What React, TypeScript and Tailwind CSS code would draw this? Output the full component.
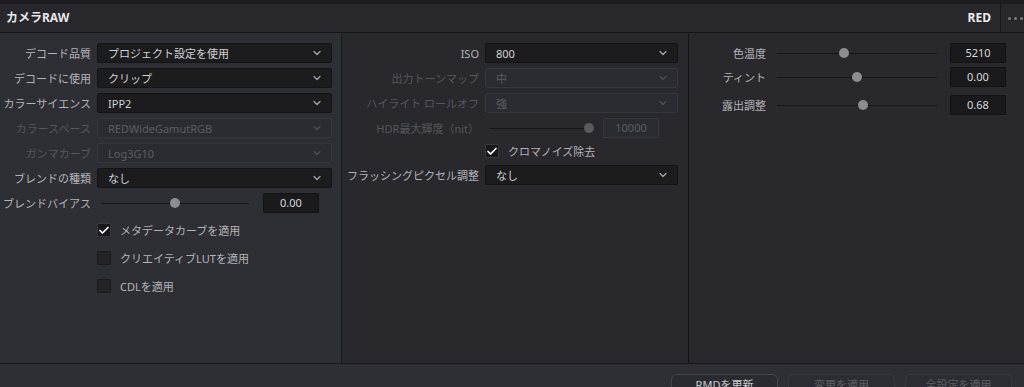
import React from "react";
import { ChevronDown, Check } from "lucide-react";

const font = { fontFamily: '"Noto Sans", "Noto Sans CJK JP", sans-serif' };

const Select = ({ value, disabled = false, w }: { value: string; disabled?: boolean; w: string }) => (
  <div
    className={`${w} h-[20px] flex items-center justify-between pl-[10px] pr-[8px] rounded-[2px] border ${
      disabled ? "bg-[#2b2c31] border-[#36373c] text-[#5c5d62]" : "bg-[#1c1c1f] border-[#141416] text-[#d2d2d4]"
    }`}
  >
    <span className="text-[11px] leading-none">{value}</span>
    <ChevronDown size={12} strokeWidth={2.4} className={disabled ? "text-[#4e4f54]" : "text-[#a8a8ac]"} />
  </div>
);

const Slider = ({ w, pos, disabled = false }: { w: string; pos: number; disabled?: boolean }) => (
  <div className={`${w} relative h-[10px] flex items-center`}>
    <div className="w-full h-px bg-[#17171a]" />
    <div
      className={`absolute top-0 w-[10px] h-[10px] rounded-full ${disabled ? "bg-[#5a5b60]" : "bg-[#8d8d90]"}`}
      style={{ left: `calc(${pos}% - 5px)` }}
    />
  </div>
);

const ValueBox = ({ v, disabled = false }: { v: string; disabled?: boolean }) => (
  <div
    className={`w-[56px] h-[20px] flex items-center justify-center text-[11px] rounded-[1px] border ${
      disabled ? "bg-[#2b2c31] border-[#36373c] text-[#5c5d62]" : "bg-[#1a1a1d] border-[#131315] text-[#d8d8da]"
    }`}
  >
    {v}
  </div>
);

const Label = ({ text, w, disabled = false }: { text: string; w: string; disabled?: boolean }) => (
  <div className={`${w} shrink-0 text-right text-[11px] leading-none ${disabled ? "text-[#56575c]" : "text-[#b4b4b8]"}`}>
    {text}
  </div>
);

const CheckBox = ({ checked, label }: { checked: boolean; label: string }) => (
  <div className="flex items-center gap-[9px] h-[14px]">
    <div
      className={`w-[14px] h-[14px] flex items-center justify-center rounded-[1px] border ${
        checked ? "bg-[#18181a] border-[#3a3a3e]" : "bg-[#232326] border-[#1b1b1d]"
      }`}
    >
      {checked && <Check size={13} strokeWidth={3.4} className="text-white" />}
    </div>
    <span className="text-[11px] text-[#b4b4b8] leading-none">{label}</span>
  </div>
);

export default function App() {
  return (
    <div className="w-[1024px] h-[387px] overflow-hidden bg-[#1c1c20] flex flex-col" style={font}>
      <div className="h-[4px] shrink-0 bg-[#1d1d21]" />
      {/* header */}
      <div className="h-[29px] shrink-0 bg-[#27272c] border-b border-[#161619] flex items-center">
        <div className="flex-1 pl-[6px] text-[12px] font-bold text-[#e6e6e8]">カメラRAW</div>
        <div className="pr-[9px] text-[12px] font-bold text-[#ececee]">RED</div>
        <div className="w-[24px] h-full border-l border-[#18181b] flex items-center gap-[3px] pl-[7px]">
          <span className="w-[3px] h-[3px] rounded-full bg-[#7a7a7e]" />
          <span className="w-[3px] h-[3px] rounded-full bg-[#7a7a7e]" />
          <span className="w-[3px] h-[3px] rounded-full bg-[#7a7a7e]" />
        </div>
      </div>

      {/* body */}
      <div className="h-[331px] shrink-0 flex border-b border-[#18181b]">
        {/* left */}
        <div className="w-[342px] bg-[#2e2f34] border-r border-[#1a1a1d] pt-[10px] flex flex-col">
          <div className="flex flex-col gap-[5px]">
            {[
              ["デコード品質", "プロジェクト設定を使用", false],
              ["デコードに使用", "クリップ", false],
              ["カラーサイエンス", "IPP2", false],
              ["カラースペース", "REDWideGamutRGB", true],
              ["ガンマカーブ", "Log3G10", true],
              ["ブレンドの種類", "なし", false],
            ].map(([l, v, d]) => (
              <div key={l as string} className="flex items-center gap-[6px]">
                <Label text={l as string} w="w-[91px]" disabled={d as boolean} />
                <Select value={v as string} disabled={d as boolean} w="w-[235px]" />
              </div>
            ))}
            <div className="flex items-center h-[20px]">
              <Label text="ブレンドバイアス" w="w-[91px]" />
              <div className="ml-[10px]">
                <Slider w="w-[148px]" pos={50} />
              </div>
              <div className="ml-[14px]">
                <ValueBox v="0.00" />
              </div>
            </div>
          </div>
          <div className="pl-[97px] pt-[10px] flex flex-col gap-[14px]">
            <CheckBox checked label="メタデータカーブを適用" />
            <CheckBox checked={false} label="クリエイティブLUTを適用" />
            <CheckBox checked={false} label="CDLを適用" />
          </div>
        </div>

        {/* middle */}
        <div className="w-[347px] bg-[#28282d] border-r border-[#141416] pt-[10px] flex flex-col gap-[5px]">
          {[
            ["ISO", "800", false],
            ["出力トーンマップ", "中", true],
            ["ハイライト ロールオフ", "強", true],
          ].map(([l, v, d]) => (
            <div key={l as string} className="flex items-center gap-[6px]">
              <Label text={l as string} w="w-[137px]" disabled={d as boolean} />
              <Select value={v as string} disabled={d as boolean} w="w-[193px]" />
            </div>
          ))}
          <div className="flex items-center h-[20px]">
            <Label text="HDR最大輝度（nit）" w="w-[137px]" disabled />
            <div className="ml-[10px]">
              <Slider w="w-[100px]" pos={100} disabled />
            </div>
            <div className="ml-[14px]">
              <ValueBox v="10000" disabled />
            </div>
          </div>
          <div className="pl-[143px] pt-[1px] pb-[2px]">
            <CheckBox checked label="クロマノイズ除去" />
          </div>
          <div className="flex items-center gap-[6px]">
            <Label text="フラッシングピクセル調整" w="w-[137px]" />
            <Select value="なし" w="w-[193px]" />
          </div>
        </div>

        {/* right */}
        <div className="flex-1 bg-[#28282d] pt-[10px] flex flex-col">
          {[
            ["色温度", "5210", 42, "mt-0"],
            ["ティント", "0.00", 50, "mt-[4px]"],
            ["露出調整", "0.68", 54, "mt-[8px]"],
          ].map(([l, v, p, m]) => (
            <div key={l as string} className={`flex items-center h-[20px] ${m}`}>
              <Label text={l as string} w="w-[77px]" />
              <div className="ml-[11px]">
                <Slider w="w-[160px]" pos={p as number} />
              </div>
              <div className="ml-[13px]">
                <ValueBox v={v as string} />
              </div>
            </div>
          ))}
        </div>
      </div>

      {/* footer */}
      <div className="flex-1 min-h-0 bg-[#2e2f34] flex items-start justify-end gap-[10px] pr-[12px] pt-[10px]">
        <div className="w-[107px] h-[22px] shrink-0 rounded-[6px] border border-[#44454a] bg-[#2a2b30] flex items-center justify-center text-[11px] text-[#c8c8cc]">
          RMDを更新
        </div>
        <div className="w-[107px] h-[22px] shrink-0 rounded-[6px] border border-[#38393e] bg-[#2c2d32] flex items-center justify-center text-[11px] text-[#5c5d62]">
          変更を適用
        </div>
        <div className="w-[107px] h-[22px] shrink-0 rounded-[6px] border border-[#38393e] bg-[#2c2d32] flex items-center justify-center text-[11px] text-[#5c5d62]">
          全設定を適用
        </div>
      </div>
    </div>
  );
}
